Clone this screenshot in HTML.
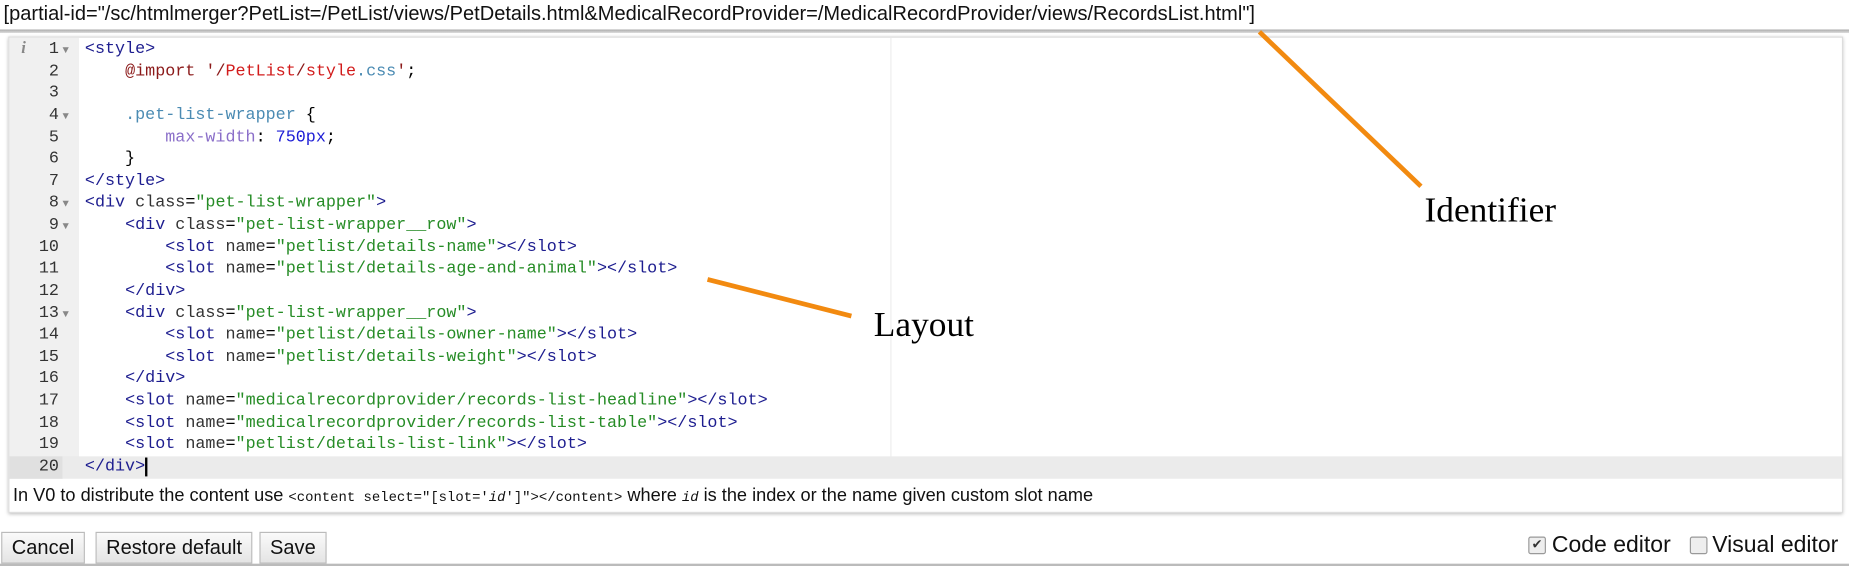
<!DOCTYPE html>
<html><head><style>
body{margin:0;width:1849px;height:566px;background:#fff;position:relative;overflow:hidden;font-family:"Liberation Sans",Arial,sans-serif}
.wrap{position:absolute;left:0;top:0;width:1568px;height:480px;transform:scale(1.17921);transform-origin:0 0}
.top{position:absolute;left:3px;top:2px;font-size:17px;color:#111;white-space:nowrap}
.topline{position:absolute;left:0;top:25px;width:1568px;height:3px;background:linear-gradient(#aaa,#ddd)}
.ed{position:absolute;left:7px;top:31px;width:1554px;height:402px;border:1px solid #ddd;box-shadow:0 1px 3px #bbb;background:#fff}
.gut{position:absolute;left:0;top:0;width:59px;height:373px;background:#f0f0f0}
.code{position:absolute;left:0;top:1px;font-family:"Liberation Mono","DejaVu Sans Mono",monospace;font-size:14.2px;line-height:18.63px;width:100%}
.l{height:18.63px;white-space:pre;position:relative}
.n{display:inline-block;width:42px;text-align:right;color:#333;padding-right:3px}
.f{display:inline-block;width:19px;color:#888;font-size:9px}
.hl{background:#ebebeb}
.t{color:#1d1d8f}.a{color:#333}.s{color:#268c26}.k{color:#8b1a1a}.r{color:#d21b1b}.p{color:#4b8bb3}.pr{color:#8b6fc9}.num{color:#1d1dd6}
.pm{position:absolute;left:747px;top:0;width:1px;height:373px;background:#eee}
.hint{position:absolute;left:3px;top:380px;font-size:15.4px;color:#111}
.hint code{font-family:"Liberation Mono",monospace;font-size:11.8px}
.btn{position:absolute;top:451px;height:25px;border:1px solid #bbb;background:linear-gradient(#fafafa,#e4e4e4);font-size:17px;line-height:25px;padding:0 8px;color:#111}
.cb{position:absolute;top:455px;width:13px;height:13px;border:1px solid #999;border-radius:2px;background:#eee}
.lbl{position:absolute;top:451px;font-size:19.5px;color:#111}
.bot{position:absolute;left:0;top:478px;width:1568px;height:2px;background:#bbb}
.ann{position:absolute;font-family:"Liberation Serif",serif;font-size:30px;color:#000}
</style></head><body>
<div class="wrap">
<div class="top">[partial-id="/sc/htmlmerger?PetList=/PetList/views/PetDetails.html&amp;MedicalRecordProvider=/MedicalRecordProvider/views/RecordsList.html"]</div>
<div class="topline"></div>
<div class="ed">
<div class="gut"></div>
<div class="pm"></div>
<div style="position:absolute;left:10px;top:2px;color:#888;font-style:italic;font-weight:bold;font-family:'Liberation Serif',serif;font-size:14px">i</div>
<div class="code">
<div class="l"><span class="n">1</span><span class="f">▼</span><span class="t">&lt;style&gt;</span></div>
<div class="l"><span class="n">2</span><span class="f"></span>    <span class="k">@import</span> <span class="k">'/</span><span class="r">PetList</span><span class="k">/</span><span class="r">style</span><span class="p">.css</span><span class="k">'</span>;</div>
<div class="l"><span class="n">3</span><span class="f"></span></div>
<div class="l"><span class="n">4</span><span class="f">▼</span>    <span class="p">.pet-list-wrapper</span> {</div>
<div class="l"><span class="n">5</span><span class="f"></span>        <span class="pr">max-width</span>: <span class="num">750px</span>;</div>
<div class="l"><span class="n">6</span><span class="f"></span>    }</div>
<div class="l"><span class="n">7</span><span class="f"></span><span class="t">&lt;/style&gt;</span></div>
<div class="l"><span class="n">8</span><span class="f">▼</span><span class="t">&lt;div</span> <span class="a">class</span>=<span class="s">"pet-list-wrapper"</span><span class="t">&gt;</span></div>
<div class="l"><span class="n">9</span><span class="f">▼</span>    <span class="t">&lt;div</span> <span class="a">class</span>=<span class="s">"pet-list-wrapper__row"</span><span class="t">&gt;</span></div>
<div class="l"><span class="n">10</span><span class="f"></span>        <span class="t">&lt;slot</span> <span class="a">name</span>=<span class="s">"petlist/details-name"</span><span class="t">&gt;&lt;/slot&gt;</span></div>
<div class="l"><span class="n">11</span><span class="f"></span>        <span class="t">&lt;slot</span> <span class="a">name</span>=<span class="s">"petlist/details-age-and-animal"</span><span class="t">&gt;&lt;/slot&gt;</span></div>
<div class="l"><span class="n">12</span><span class="f"></span>    <span class="t">&lt;/div&gt;</span></div>
<div class="l"><span class="n">13</span><span class="f">▼</span>    <span class="t">&lt;div</span> <span class="a">class</span>=<span class="s">"pet-list-wrapper__row"</span><span class="t">&gt;</span></div>
<div class="l"><span class="n">14</span><span class="f"></span>        <span class="t">&lt;slot</span> <span class="a">name</span>=<span class="s">"petlist/details-owner-name"</span><span class="t">&gt;&lt;/slot&gt;</span></div>
<div class="l"><span class="n">15</span><span class="f"></span>        <span class="t">&lt;slot</span> <span class="a">name</span>=<span class="s">"petlist/details-weight"</span><span class="t">&gt;&lt;/slot&gt;</span></div>
<div class="l"><span class="n">16</span><span class="f"></span>    <span class="t">&lt;/div&gt;</span></div>
<div class="l"><span class="n">17</span><span class="f"></span>    <span class="t">&lt;slot</span> <span class="a">name</span>=<span class="s">"medicalrecordprovider/records-list-headline"</span><span class="t">&gt;&lt;/slot&gt;</span></div>
<div class="l"><span class="n">18</span><span class="f"></span>    <span class="t">&lt;slot</span> <span class="a">name</span>=<span class="s">"medicalrecordprovider/records-list-table"</span><span class="t">&gt;&lt;/slot&gt;</span></div>
<div class="l"><span class="n">19</span><span class="f"></span>    <span class="t">&lt;slot</span> <span class="a">name</span>=<span class="s">"petlist/details-list-link"</span><span class="t">&gt;&lt;/slot&gt;</span></div>
<div class="l hl"><span class="n" style="background:#e0e0e0">20</span><span class="f" style="background:#e0e0e0;width:14px"></span><span style="display:inline-block;width:5px"></span><span class="t">&lt;/div&gt;</span><span style="border-left:2px solid #000"></span></div>
</div>
<div class="hint">In V0 to distribute the content use <code>&lt;content select="[slot='<i>id</i>']"&gt;&lt;/content&gt;</code> where <code><i>id</i></code> is the index or the name given custom slot name</div>
</div>
<div class="btn" style="left:1px">Cancel</div>
<div class="btn" style="left:81px">Restore default</div>
<div class="btn" style="left:220px">Save</div>
<div class="cb" style="left:1296px;text-align:center;font-size:11px;line-height:13px;color:#333">✔</div>
<div class="lbl" style="left:1316px">Code editor</div>
<div class="cb" style="left:1433px"></div>
<div class="lbl" style="left:1452px">Visual editor</div>
<div class="bot"></div>
<svg style="position:absolute;left:0;top:0" width="1568" height="480"><line x1="1068" y1="27" x2="1205" y2="158" stroke="#f28a10" stroke-width="4"/><line x1="600" y1="237" x2="722" y2="268" stroke="#f28a10" stroke-width="4"/></svg>
<div class="ann" style="left:1208px;top:162px">Identifier</div>
<div class="ann" style="left:741px;top:259px">Layout</div>
</div>
</body></html>
